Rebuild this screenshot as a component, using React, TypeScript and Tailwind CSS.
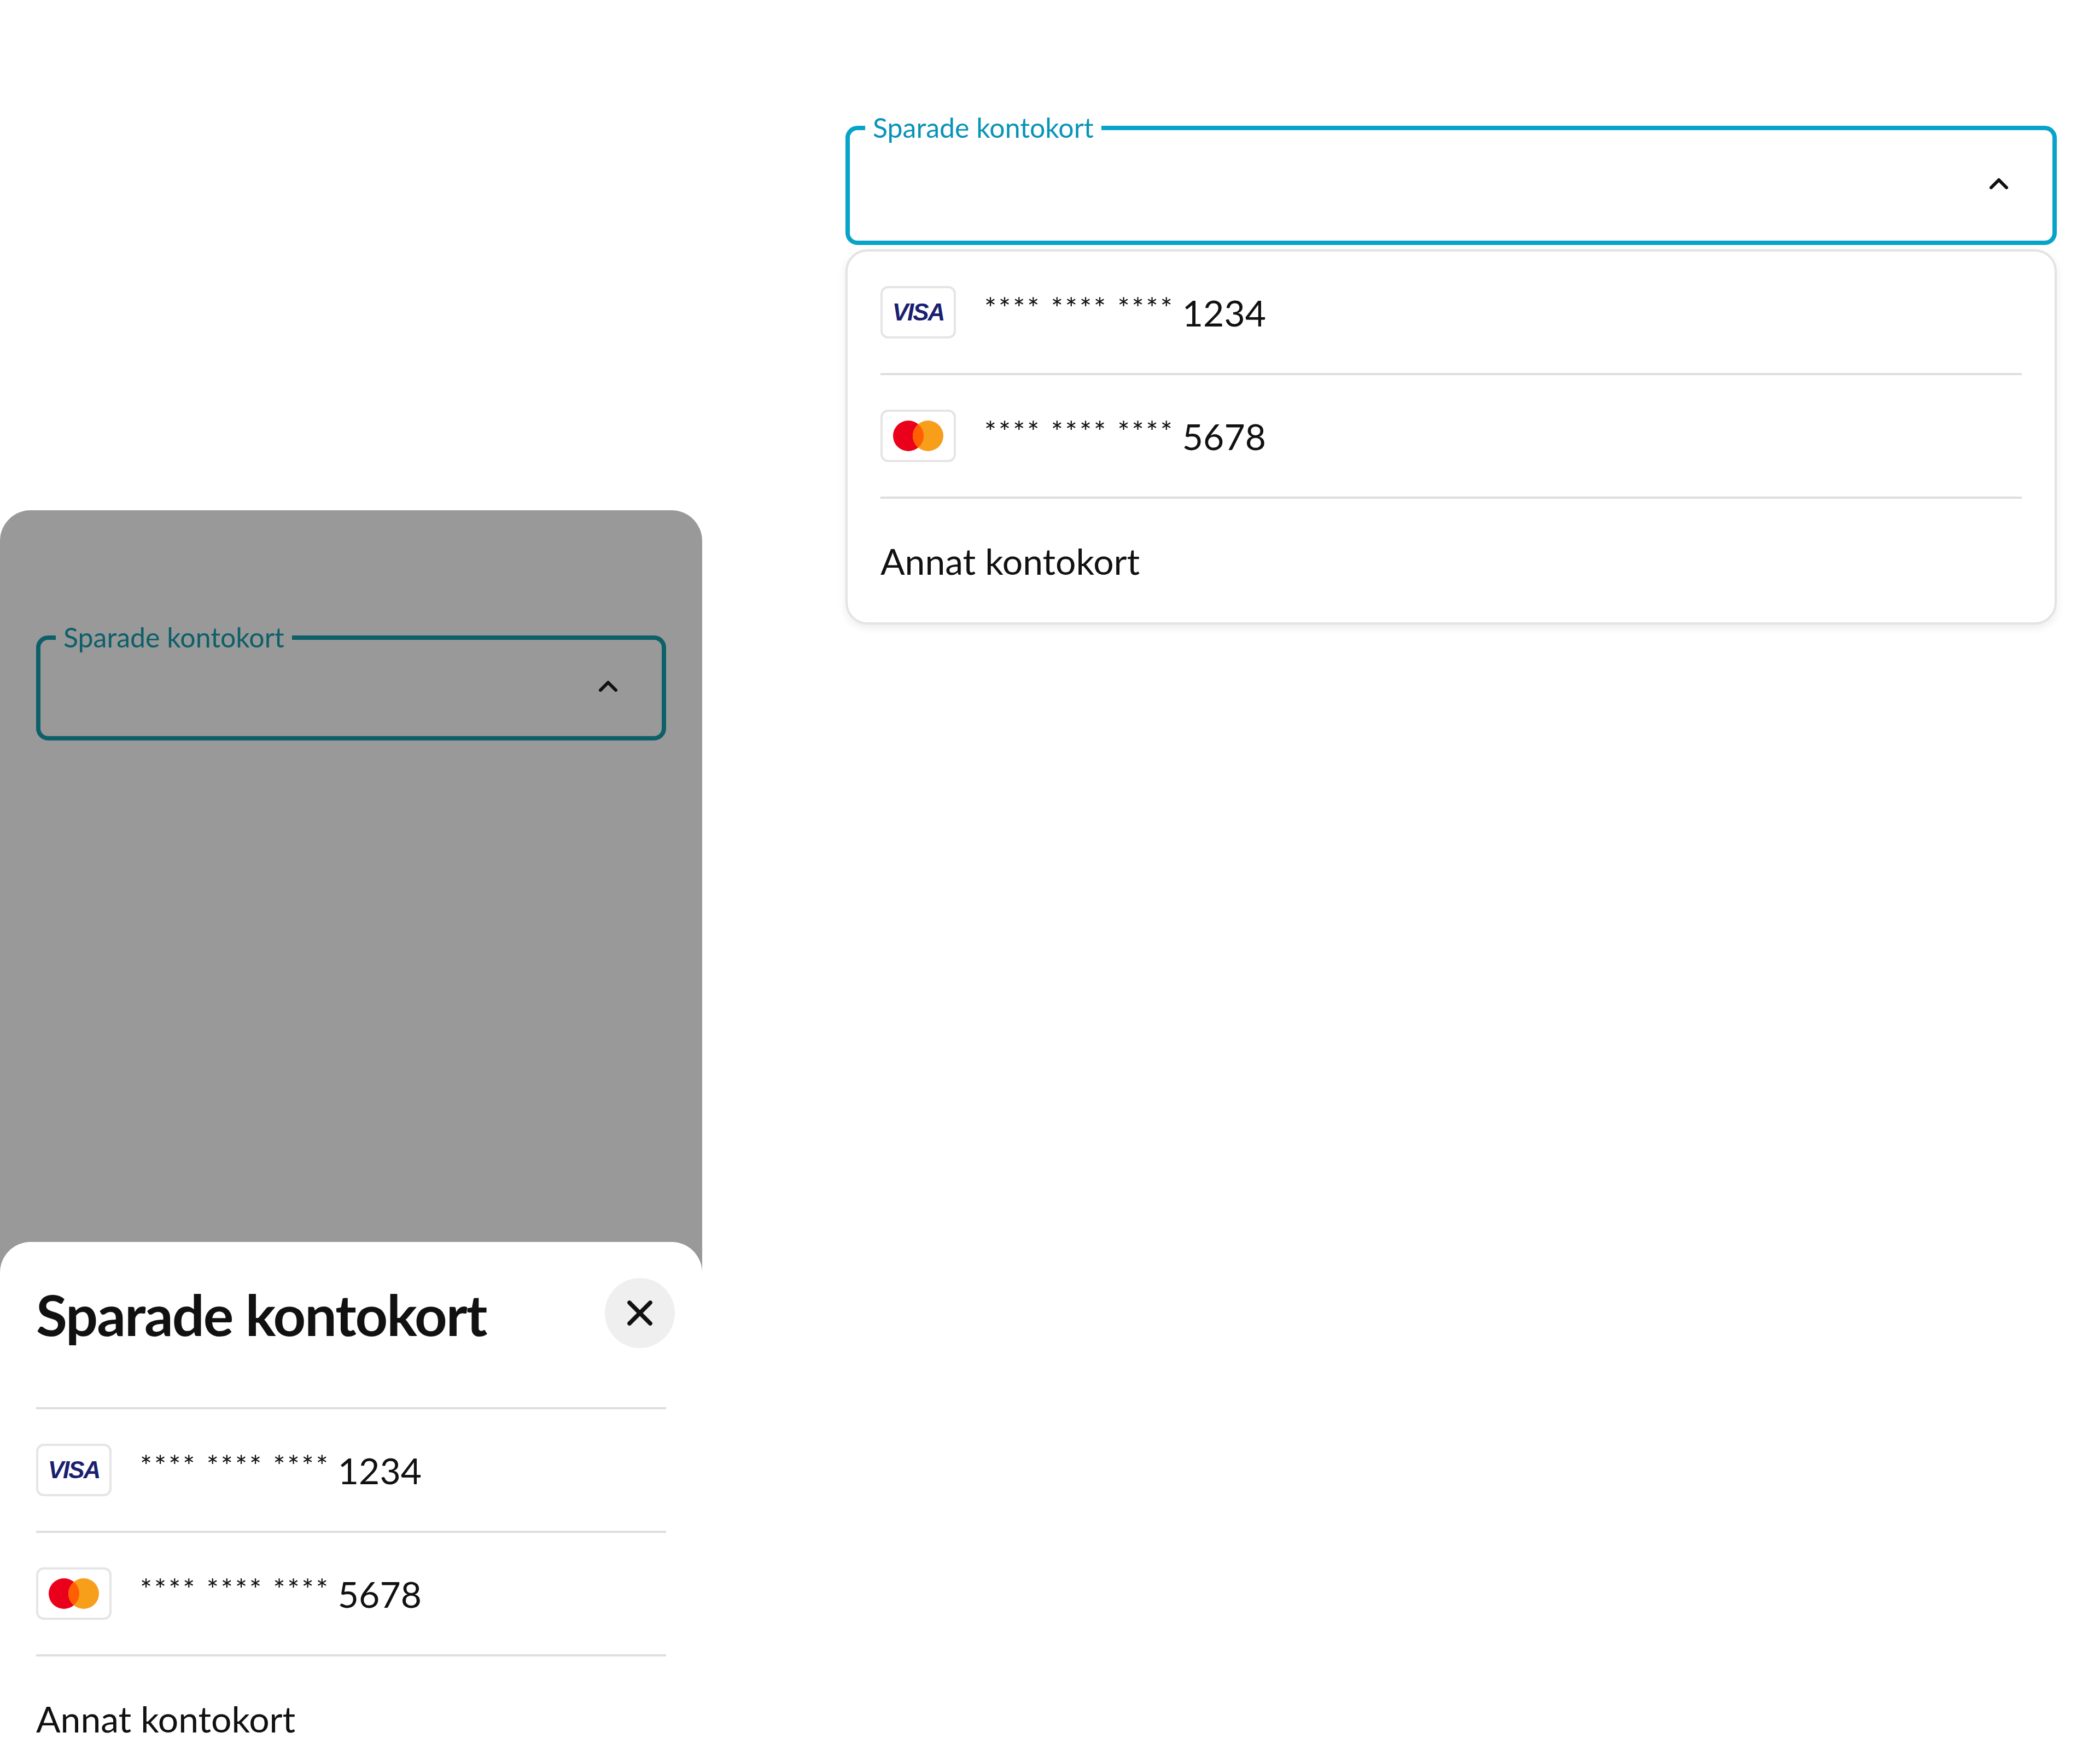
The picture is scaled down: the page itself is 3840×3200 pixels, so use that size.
import { X } from "lucide-react";

function Chevron() {
  return (
    <svg width="48" height="48" viewBox="0 0 24 24" fill="none" stroke="#111" strokeWidth="3" strokeLinecap="round" strokeLinejoin="round">
      <path d="M5 15.5l7-7 7 7" />
    </svg>
  );
}

function VisaIcon() {
  return (
    <div className="w-[138px] h-[96px] rounded-[14px] border-[4px] border-[#e5e5e5] bg-white flex items-center justify-center">
      <span className="text-[44px] font-black italic text-[#1a1f71] tracking-[-2px]" style={{ fontFamily: "'Liberation Sans', sans-serif" }}>VISA</span>
    </div>
  );
}

function McIcon() {
  return (
    <div className="w-[138px] h-[96px] rounded-[14px] border-[4px] border-[#e5e5e5] bg-white flex items-center justify-center">
      <svg width="96" height="60" viewBox="0 0 96 60">
        <circle cx="30" cy="30" r="28" fill="#eb001b" />
        <circle cx="66" cy="30" r="28" fill="#f79e1b" />
        <path d="M48 8.5a28 28 0 0 1 0 43a28 28 0 0 1 0-43z" fill="#ff5f00" />
      </svg>
    </div>
  );
}

function CardRow({ icon, last }: { icon: "visa" | "mc"; last: string }) {
  return (
    <div className="h-[226px] flex items-center gap-[52px] border-b-[4px] border-[#dedede]">
      {icon === "visa" ? <VisaIcon /> : <McIcon />}
      <span className="text-[#111] flex items-baseline">
        <span className="text-[52px] tracking-[4px] -translate-y-[14px]">**** **** ****</span>
        <span className="text-[66px] ml-[14px]">{last}</span>
      </span>
    </div>
  );
}

function Field({ color, legendBg }: { color: string; legendBg: string }) {
  return (
    <fieldset className={`h-[226px] rounded-[22px] border-[8px] ${color} px-[50px] flex items-center justify-end`}>
      <legend className={`px-[14px] -ml-[22px] text-[50px] ${legendBg}`}>Sparade kontokort</legend>
      <div className="-mt-[40px] mr-[24px]"><Chevron /></div>
    </fieldset>
  );
}

export default function App() {
  return (
    <div className="w-[3840px] h-[3200px] bg-white flex overflow-hidden" style={{ fontFamily: "Lato, 'Noto Sans', sans-serif" }}>
      <div className="w-[1284px] pt-[933px] flex flex-col">
        <div className="flex-1 bg-[#999999] rounded-t-[56px] flex flex-col">
          <div className="px-[66px] pt-[195px]">
            <fieldset className="h-[226px] rounded-[22px] border-[8px] border-[#0d5f69] px-[50px] flex items-center justify-end">
              <legend className="px-[14px] -ml-[22px] text-[50px] text-[#0d5f69]">Sparade kontokort</legend>
              <div className="-mt-[40px] mr-[24px]"><Chevron /></div>
            </fieldset>
          </div>
          <div className="flex-1" />
          <div className="h-[929px] bg-white rounded-t-[56px] px-[66px] pt-[50px]">
            <div className="flex items-start justify-between h-[256px] border-b-[4px] border-[#dedede]">
              <h2 className="text-[104px] font-bold text-[#111] tracking-[-2px] pt-[30px] leading-none">Sparade kontokort</h2>
              <div className="w-[128px] h-[128px] rounded-full bg-[#efefef] flex items-center justify-center -mr-[16px] mt-[16px]">
                <X size={76} strokeWidth={2.4} color="#111" />
              </div>
            </div>
            <CardRow icon="visa" last="1234" />
            <CardRow icon="mc" last="5678" />
            <div className="h-[226px] flex items-center text-[66px] text-[#111]">Annat kontokort</div>
          </div>
        </div>
      </div>
      <div className="ml-[262px] w-[2215px] pt-[196px]">
        <fieldset className="h-[252px] rounded-[22px] border-[8px] border-[#08a3c8] px-[50px] flex items-center justify-end">
          <legend className="px-[14px] -ml-[22px] text-[50px] text-[#0a93b8]">Sparade kontokort</legend>
          <div className="-mt-[40px] mr-[24px]"><Chevron /></div>
        </fieldset>
        <div className="mt-[8px] bg-white border-[4px] border-[#e3e3e3] rounded-[40px] px-[60px] shadow-[0_6px_16px_rgba(0,0,0,0.08)]">
          <CardRow icon="visa" last="1234" />
          <CardRow icon="mc" last="5678" />
          <div className="h-[226px] flex items-center text-[66px] text-[#111]">Annat kontokort</div>
        </div>
      </div>
    </div>
  );
}
